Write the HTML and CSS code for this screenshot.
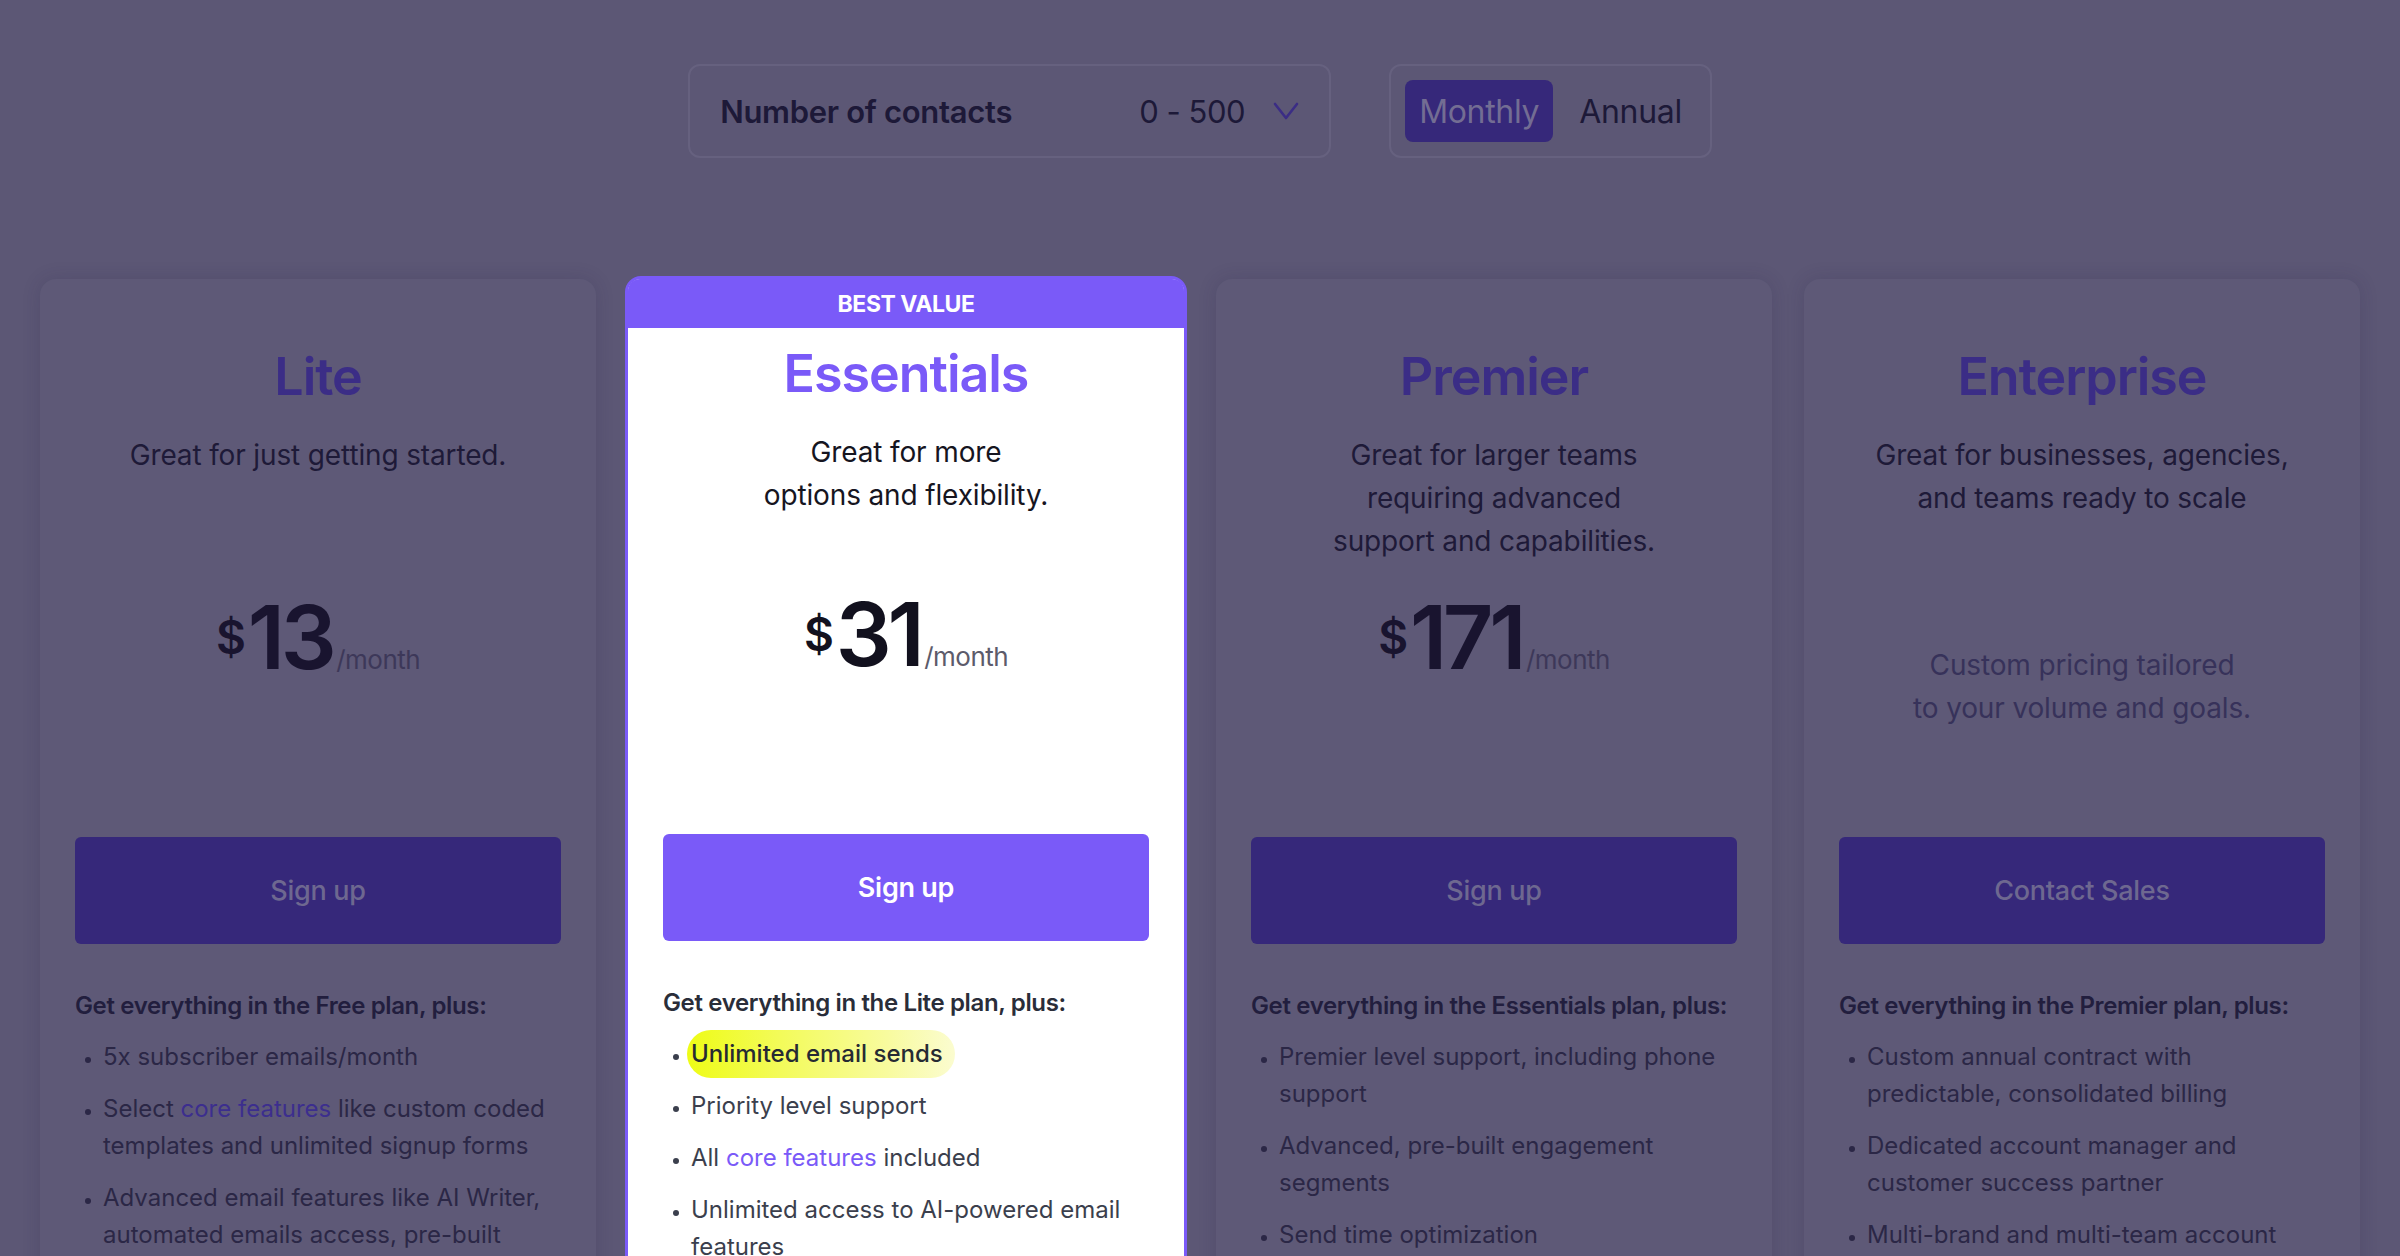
FILE: index.html
```html
<!DOCTYPE html>
<html lang="en">
<head>
<meta charset="utf-8">
<title>Pricing</title>
<link rel="stylesheet" href="styles.css">
</head>
<body>
<div class="page">
  <div class="controls">
    <div class="contacts">
      <span class="contacts-label">Number of contacts</span>
      <span class="contacts-value">0 - 500
        <svg class="chev" viewBox="0 0 26 18" aria-hidden="true"><polyline points="2,2 13,16 24,2" fill="none" stroke="#3b2d85" stroke-width="2.6" stroke-linecap="round" stroke-linejoin="round"/></svg>
      </span>
    </div>
    <div class="toggle">
      <span class="toggle-btn active">Monthly</span>
      <span class="toggle-btn">Annual</span>
    </div>
  </div>

  <div class="plans">
    <div class="plan">
      <div class="badge"></div>
      <div class="plan-body">
        <h2 class="plan-name">Lite</h2>
        <p class="plan-desc">Great for just getting started.</p>
        <div class="price-area">
          <div class="price"><span class="cur">$</span><span class="amt">13</span><span class="per">/month</span></div>
        </div>
        <a class="cta">Sign up</a>
        <p class="feat-head">Get everything in the Free plan, plus:</p>
        <ul class="feats">
          <li>5x subscriber emails/month</li>
          <li>Select <a class="link">core features</a> like custom coded templates and unlimited signup forms</li>
          <li>Advanced email features like AI Writer, automated emails access, pre-built segments, and more</li>
        </ul>
      </div>
    </div>

    <div class="plan featured">
      <div class="badge">BEST VALUE</div>
      <div class="plan-body">
        <h2 class="plan-name">Essentials</h2>
        <p class="plan-desc">Great for more<br>options and flexibility.</p>
        <div class="price-area">
          <div class="price"><span class="cur">$</span><span class="amt">31</span><span class="per">/month</span></div>
        </div>
        <a class="cta">Sign up</a>
        <p class="feat-head">Get everything in the Lite plan, plus:</p>
        <ul class="feats">
          <li><span class="hl">Unlimited email sends</span></li>
          <li>Priority level support</li>
          <li>All <a class="link">core features</a> included</li>
          <li>Unlimited access to AI-powered email features</li>
          <li>Advanced reporting and insights</li>
        </ul>
      </div>
    </div>

    <div class="plan">
      <div class="badge"></div>
      <div class="plan-body">
        <h2 class="plan-name">Premier</h2>
        <p class="plan-desc">Great for larger teams<br>requiring advanced<br>support and capabilities.</p>
        <div class="price-area">
          <div class="price"><span class="cur">$</span><span class="amt">171</span><span class="per">/month</span></div>
        </div>
        <a class="cta">Sign up</a>
        <p class="feat-head">Get everything in the Essentials plan, plus:</p>
        <ul class="feats">
          <li>Premier level support, including phone support</li>
          <li>Advanced, pre-built engagement segments</li>
          <li>Send time optimization</li>
        </ul>
      </div>
    </div>

    <div class="plan">
      <div class="badge"></div>
      <div class="plan-body">
        <h2 class="plan-name">Enterprise</h2>
        <p class="plan-desc">Great for businesses, agencies,<br>and teams ready to scale</p>
        <div class="price-area">
          <p class="custom-price">Custom pricing tailored<br>to your volume and goals.</p>
        </div>
        <a class="cta">Contact Sales</a>
        <p class="feat-head">Get everything in the Premier plan, plus:</p>
        <ul class="feats">
          <li>Custom annual contract with predictable, consolidated billing</li>
          <li>Dedicated account manager and customer success partner</li>
          <li>Multi-brand and multi-team account management</li>
        </ul>
      </div>
    </div>
  </div>
</div>
</body>
</html>
```

FILE: styles.css
```css
html, body {
  margin: 0;
  padding: 0;
}

body {
  background: #5c5775;
  font-family: "Inter", "Roboto", sans-serif;
  height: 1256px;
  overflow: hidden;
  color: #1d1938;
}

.page {
  width: 2400px;
}

/* ---------- top controls ---------- */
.controls {
  display: flex;
  justify-content: center;
  gap: 58px;
  padding-top: 64px;
}

.contacts {
  width: 643px;
  height: 94px;
  box-sizing: border-box;
  border: 2px solid #66617f;
  border-radius: 12px;
  display: flex;
  align-items: center;
  justify-content: space-between;
  padding: 0 30px;
}

.contacts-label {
  font-size: 31px;
  font-weight: 600;
  letter-spacing: -0.01em;
  color: #1d1938;
}

.contacts-value {
  display: flex;
  align-items: center;
  gap: 28px;
  font-size: 31px;
  letter-spacing: -0.015em;
  color: #1d1938;
}

.chev {
  width: 26px;
  height: 18px;
}

.toggle {
  height: 94px;
  box-sizing: border-box;
  border: 2px solid #66617f;
  border-radius: 12px;
  padding: 14px;
  display: flex;
  gap: 12px;
}

.toggle-btn {
  display: flex;
  align-items: center;
  padding: 0 14px;
  font-size: 32px;
  letter-spacing: -0.01em;
  color: #1d1938;
  border-radius: 8px;
}

.toggle-btn.active {
  background: #36287a;
  color: #736d93;
}

/* ---------- plans ---------- */
.plans {
  display: grid;
  grid-template-columns: repeat(4, 556px);
  gap: 32px;
  width: 2320px;
  margin: 121px auto 0;
  align-items: start;
}

.plan {
  box-sizing: border-box;
  border: 3px solid transparent;
  border-radius: 16px;
  background: #5e5977;
  box-shadow: 0 0 18px rgba(40, 32, 70, 0.18);
  padding-bottom: 60px;
}

.plan.featured {
  margin: -3px -3px 0;
  background: #ffffff;
  border-color: #7a5af8;
  box-shadow: none;
}

.badge {
  height: 49px;
  border-radius: 12px 12px 0 0;
  display: flex;
  align-items: center;
  justify-content: center;
  font-size: 23px;
  font-weight: 700;
  letter-spacing: -0.02em;
  color: #ffffff;
}

.featured .badge {
  background: #7a5af8;
}

.plan-body {
  padding: 0 32px;
}

.featured .plan-body {
  padding: 0 35px;
}

.plan-name {
  margin: 16px 0 0;
  font-size: 52px;
  line-height: 60px;
  font-weight: 600;
  letter-spacing: -0.02em;
  text-align: center;
  color: #3b2d86;
}

.featured .plan-name {
  color: #7a5af8;
}

.plan-desc {
  margin: 27px 0 0;
  height: 129px;
  font-size: 28px;
  line-height: 43px;
  letter-spacing: -0.005em;
  text-align: center;
  color: #1e1a38;
}

.featured .plan-desc {
  color: #16151f;
}

.price-area {
  height: 274px;
}

.price {
  padding-top: 30px;
  text-align: center;
  font-size: 88px;
  line-height: 88px;
  white-space: nowrap;
  color: #19142f;
}

.featured .price {
  color: #12111e;
}

.amt {
  font-weight: 600;
  letter-spacing: -0.05em;
  line-height: 1;
}

.cur {
  font-size: 46px;
  font-weight: 600;
  line-height: 1;
  vertical-align: 15px;
  margin-right: 2px;
}

.per {
  font-size: 26px;
  line-height: 1;
  letter-spacing: -0.02em;
  color: #3d3859;
  margin-left: 4px;
}

.featured .per {
  color: #5c5b6b;
}

.custom-price {
  margin: 0;
  padding-top: 81px;
  font-size: 28px;
  line-height: 43px;
  letter-spacing: -0.005em;
  text-align: center;
  color: #37325a;
}

.cta {
  display: flex;
  align-items: center;
  justify-content: center;
  height: 107px;
  border-radius: 6px;
  background: #36287a;
  color: #6e6890;
  font-size: 27px;
  font-weight: 500;
  letter-spacing: -0.01em;
}

.featured .cta {
  background: #7a5af8;
  color: #ffffff;
  font-weight: 600;
}

.feat-head {
  margin: 44px 0 0;
  font-size: 24px;
  line-height: 36px;
  font-weight: 600;
  letter-spacing: -0.015em;
  color: #221e3e;
}

.featured .feat-head {
  color: #2a2d39;
}

.feats {
  margin: 14px 0 0;
  padding: 0 0 0 28px;
  list-style: disc;
}

.feats li {
  font-size: 24px;
  line-height: 37px;
  letter-spacing: 0;
  color: #2b2746;
  margin-bottom: 15px;
}

.feats li::marker {
  color: #2b2746;
  font-size: 18px;
}

.featured .feats li,
.featured .feats li::marker {
  color: #3b3f4d;
}

.link {
  color: #3c2e8e;
}

.featured .link {
  color: #7a5af8;
}

.hl {
  display: inline-block;
  line-height: 37px;
  padding: 5px 12px 6px 4px;
  margin: -5px 0 -6px -4px;
  border-radius: 26px;
  background: linear-gradient(90deg, #eefc16 0%, #f3fb5a 35%, #f8fb9f 75%, #fbfcd0 100%);
  font-weight: 500;
  color: #262a33;
}
```
